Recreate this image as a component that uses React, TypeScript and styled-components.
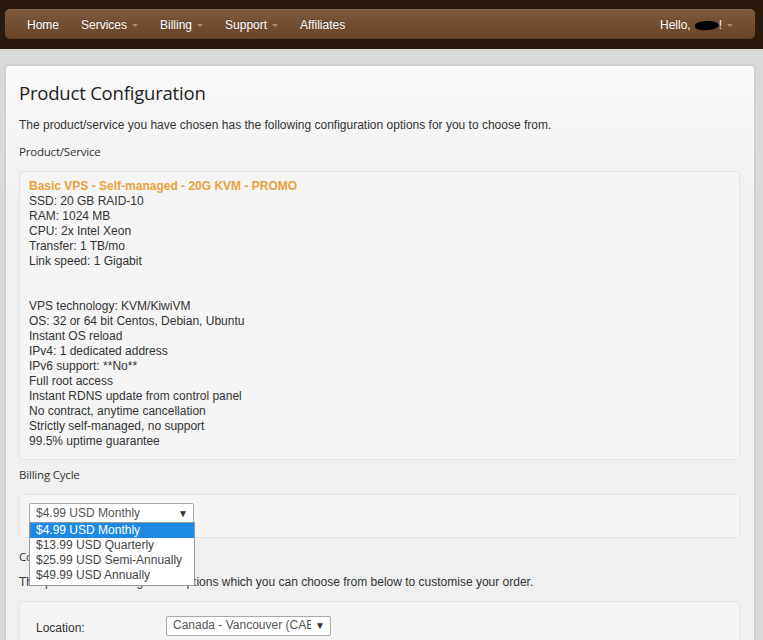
import React from 'react';
import styled, { createGlobalStyle } from 'styled-components';

const GlobalStyle = createGlobalStyle`
    html, body {
        margin: 0;
        padding: 0;
        background: #dadada;
        font-family: "Liberation Sans", Arial, sans-serif;
        font-size: 12px;
        color: #333333;
    }
`;

const TopBand = styled.div`
    background: #2a1a0b;
    padding: 9px 8px 10px 5px;
`;

const NavBar = styled.nav`
    height: 30px;
    border-radius: 5px;
    background: linear-gradient(#7e583a, #6a4427);
    box-shadow: inset 0 1px 0 rgba(255, 255, 255, 0.08);
    display: flex;
    align-items: center;
    justify-content: space-between;
    padding: 0 11px;
`;

const NavGroup = styled.div`
    display: flex;
    align-items: center;
`;

const NavItem = styled.a`
    color: #ffffff;
    text-decoration: none;
    font-size: 12px;
    padding: 1px 11px 0;
    display: flex;
    align-items: center;
    text-shadow: 0 -1px 0 rgba(0, 0, 0, 0.25);
`;

const Caret = styled.span`
    display: inline-block;
    margin-left: 5px;
    margin-top: 1px;
    width: 0;
    height: 0;
    border-left: 3px solid transparent;
    border-right: 3px solid transparent;
    border-top: 3px solid rgba(255, 255, 255, 0.35);
`;

const Redacted = styled.span`
    display: inline-block;
    width: 24px;
    height: 9px;
    background: #000000;
    border-radius: 40% 60% 50% 45%;
    margin: 2px 0 0 4px;
    transform: rotate(-4deg);
`;

const Page = styled.div`
    padding: 16px 8px 0 5px;
`;

const Panel = styled.div`
    background: linear-gradient(#fafafa, #f0f0f0 140px);
    border: 1px solid #cccccc;
    border-bottom: none;
    border-radius: 4px 4px 0 0;
    box-shadow: 0 0 2px rgba(0, 0, 0, 0.12);
    padding: 14px 14px 20px 13px;
`;

const Title = styled.h1`
    margin: 0;
    font-family: "Open Sans", sans-serif;
    font-weight: 400;
    font-size: 18.5px;
    line-height: 25px;
    color: #222222;
    letter-spacing: -0.2px;
`;

const Text = styled.p<{ $top: number }>`
    margin: ${p => p.$top}px 0 0;
    line-height: 15px;
    font-size: 12px;
    color: #333333;
`;

const Label = styled.div<{ $top: number }>`
    margin-top: ${p => p.$top}px;
    font-family: "Open Sans", sans-serif;
    font-size: 11.5px;
    line-height: 15px;
    color: #333333;
    letter-spacing: -0.2px;
`;

const Well = styled.div<{ $top: number; $pad: string }>`
    margin-top: ${p => p.$top}px;
    background: #f5f5f5;
    border: 1px solid #e4e4e4;
    border-radius: 4px;
    padding: ${p => p.$pad};
    line-height: 15px;
    position: relative;
`;

const ProductName = styled.div`
    color: #e9a33d;
    font-weight: bold;
`;

const Line = styled.div`
    min-height: 15px;
`;

const SelectBox = styled.div<{ $width: number }>`
    box-sizing: border-box;
    width: ${p => p.$width}px;
    height: 20px;
    background: #ffffff;
    border: 1px solid #a9a9a9;
    border-radius: 2px;
    display: flex;
    align-items: center;
    justify-content: space-between;
    padding: 0 5px 0 6px;
    font-size: 12px;
    color: #555555;
    white-space: nowrap;
    overflow: hidden;
`;

const SelectValue = styled.span`
    overflow: hidden;
`;

const Arrow = styled.span`
    font-size: 10px;
    color: #333333;
    margin-left: 4px;
`;

const SelectWrap = styled.div`
    position: relative;
    width: 165px;
`;

const OptionList = styled.ul`
    position: absolute;
    left: 0;
    top: 19px;
    z-index: 5;
    box-sizing: border-box;
    width: 166px;
    margin: 0;
    padding: 0 0 2px;
    list-style: none;
    background: #ffffff;
    border: 1px solid #9a9a9a;
    font-size: 12px;
`;

const Option = styled.li<{ $active?: boolean }>`
    height: 15px;
    line-height: 15px;
    padding: 0 6px;
    color: ${p => (p.$active ? '#ffffff' : '#444444')};
    background: ${p => (p.$active ? '#1e88e5' : '#ffffff')};
    white-space: nowrap;
`;

const OptionRow = styled.div`
    display: flex;
    align-items: center;
`;

const OptionName = styled.div`
    width: 130px;
    padding-top: 6px;
    align-self: flex-end;
`;

const features = [
    'SSD: 20 GB RAID-10',
    'RAM: 1024 MB',
    'CPU: 2x Intel Xeon',
    'Transfer: 1 TB/mo',
    'Link speed: 1 Gigabit',
    '',
    '',
    'VPS technology: KVM/KiwiVM',
    'OS: 32 or 64 bit Centos, Debian, Ubuntu',
    'Instant OS reload',
    'IPv4: 1 dedicated address',
    'IPv6 support: **No**',
    'Full root access',
    'Instant RDNS update from control panel',
    'No contract, anytime cancellation',
    'Strictly self-managed, no support',
    '99.5% uptime guarantee',
];

const cycles = [
    '$4.99 USD Monthly',
    '$13.99 USD Quarterly',
    '$25.99 USD Semi-Annually',
    '$49.99 USD Annually',
];

const navLeft = [
    { text: 'Home', caret: false },
    { text: 'Services', caret: true },
    { text: 'Billing', caret: true },
    { text: 'Support', caret: true },
    { text: 'Affiliates', caret: false },
];

const App = () => {
    return (
        <>
            <GlobalStyle />
            <TopBand>
                <NavBar>
                    <NavGroup>
                        {navLeft.map(item => (
                            <NavItem key={item.text} href="#">
                                {item.text}
                                {item.caret && <Caret />}
                            </NavItem>
                        ))}
                    </NavGroup>
                    <NavGroup>
                        <NavItem href="#">
                            Hello,<Redacted />!
                            <Caret />
                        </NavItem>
                    </NavGroup>
                </NavBar>
            </TopBand>
            <Page>
                <Panel>
                    <Title>Product Configuration</Title>
                    <Text $top={13}>
                        The product/service you have chosen has the following configuration options for you to choose from.
                    </Text>
                    <Label $top={11}>Product/Service</Label>
                    <Well $top={12} $pad="7px 10px 10px 9px">
                        <ProductName>Basic VPS - Self-managed - 20G KVM - PROMO</ProductName>
                        {features.map((f, i) => (
                            <Line key={i}>{f}</Line>
                        ))}
                    </Well>
                    <Label $top={7}>Billing Cycle</Label>
                    <Well $top={12} $pad="8px 9px 14px 9px">
                        <SelectWrap>
                            <SelectBox $width={165}>
                                <SelectValue>{cycles[0]}</SelectValue>
                                <Arrow>▼</Arrow>
                            </SelectBox>
                            <OptionList>
                                {cycles.map((c, i) => (
                                    <Option key={c} $active={i === 0}>{c}</Option>
                                ))}
                            </OptionList>
                        </SelectWrap>
                    </Well>
                    <Label $top={11}>Configurable Options</Label>
                    <Text $top={11}>
                        This product has configurable options which you can choose from below to customise your order.
                    </Text>
                    <Well $top={11} $pad="13px 16px 14px 16px">
                        <OptionRow>
                            <OptionName>Location:</OptionName>
                            <SelectBox $width={165}>
                                <SelectValue>Canada - Vancouver (CAE</SelectValue>
                                <Arrow>▼</Arrow>
                            </SelectBox>
                        </OptionRow>
                    </Well>
                </Panel>
            </Page>
        </>
    );
};

export default App;
